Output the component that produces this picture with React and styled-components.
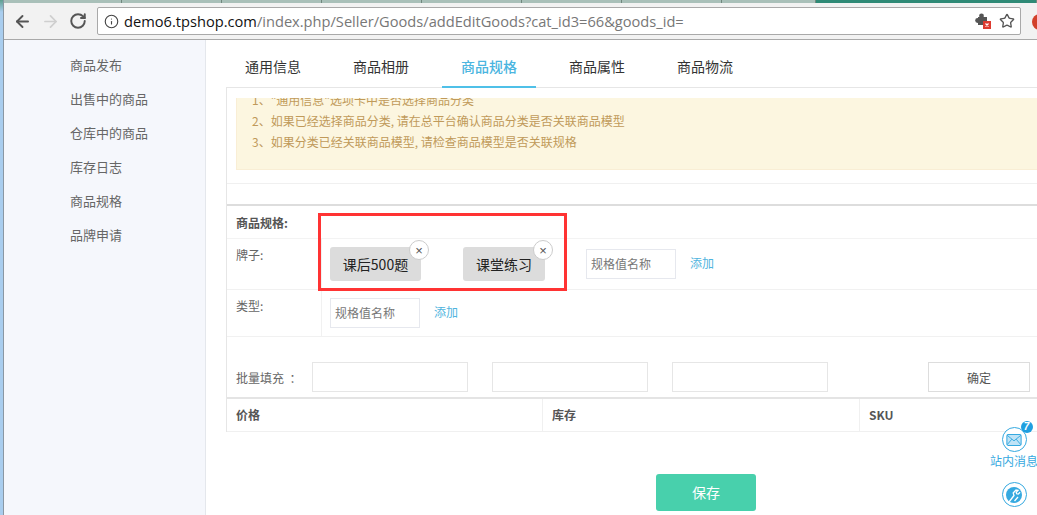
import styled, { createGlobalStyle } from "styled-components";
import { ArrowLeft, ArrowRight, RotateCw, Info, Star } from "lucide-react";

const GlobalStyle = createGlobalStyle`
  html, body { margin: 0; padding: 0; background: #fff; }
  * { box-sizing: border-box; }
  body { font-family: "Noto Sans CJK SC", "Liberation Sans", sans-serif; }
`;

const Page = styled.div`
  position: relative;
  display: flex;
  width: 1037px;
  height: 515px;
  overflow: hidden;
  background: #fff;
`;

const WindowEdge = styled.div`
  width: 4px;
  background: linear-gradient(#5f9f90 0, #a9cdee 12px);
  border-right: 1px solid #8a97a3;
`;

const Window = styled.div`
  flex: 1;
  min-width: 0;
`;

const TabStrip = styled.div`
  display: flex;
  height: 3px;
  background: #a9c0b9;
`;

const StripTab = styled.div`
  width: ${(props) => props.w}px;
  border-right: 1px solid #71887f;
  background: ${(props) => props.bg || "#a9c0b9"};
`;

const Toolbar = styled.div`
  display: flex;
  align-items: center;
  height: 37px;
  padding-left: 9px;
  background: #f2f2f2;
  border-bottom: 1px solid #a9a9a9;
`;

const NavIcons = styled.div`
  display: flex;
  align-items: center;
  width: 84px;
  gap: 9px;
  color: #555;
`;

const UrlBar = styled.div`
  display: flex;
  align-items: center;
  width: 924px;
  height: 28px;
  padding: 0 5px 0 6px;
  background: #fff;
  border: 1px solid #a9a9a9;
  border-radius: 2px;
`;

const Url = styled.div`
  flex: 1;
  margin-left: 5px;
  font-family: "Open Sans", sans-serif;
  font-size: 14.65px;
  color: #111;
  white-space: nowrap;
`;

const UrlPath = styled.span`
  color: #777;
`;

const PuzzleIcon = styled.svg`
  display: block;
  margin-right: 8px;
`;

const ProfileDot = styled.div`
  position: absolute;
  top: 14px;
  left: 1032px;
  width: 16px;
  height: 16px;
  border-radius: 50%;
  background: #d2402a;
`;

const Body = styled.div`
  display: flex;
  height: 475px;
`;

const Sidebar = styled.div`
  width: 202px;
  padding-top: 8px;
  background: #f5f7fc;
  border-right: 1px solid #e4e7ec;
`;

const SideItem = styled.div`
  height: 34px;
  padding-left: 66px;
  font-size: 13px;
  line-height: 34px;
  color: #666;
`;

const Main = styled.div`
  flex: 1;
  min-width: 0;
  padding-left: 20px;
`;

const Tabs = styled.div`
  display: flex;
  height: 48px;
  border-bottom: 1px solid #e6e6e6;
`;

const Tab = styled.div`
  height: 48px;
  margin-right: 14px;
  padding: 0 19px;
  font-size: 14px;
  line-height: 52px;
  font-weight: ${(props) => (props.active ? 500 : 400)};
  color: ${(props) => (props.active ? "#4bb5e0" : "#333")};
  border-bottom: ${(props) => (props.active ? "2px solid #4fc0e8" : "none")};
`;

const Panel = styled.div`
  padding-top: 10px;
  border-left: 1px solid #e6e6e6;
`;

const Notice = styled.div`
  height: 72px;
  margin-left: 9px;
  overflow: hidden;
  background: #fcf6e0;
  border: 1px solid #f9eed5;
  border-top: none;
  border-right: none;
`;

const NoticeList = styled.div`
  margin-top: -9px;
  padding-left: 15px;
  font-size: 12px;
  line-height: 21px;
  color: #c09a5a;
`;

const Rule = styled.div`
  height: 21px;
  margin-top: 13px;
  border-top: 1px solid #f0f0f0;
`;

const TitleRow = styled.div`
  height: 35px;
  padding-left: 9px;
  font-size: 12px;
  font-weight: 700;
  line-height: 33px;
  color: #555;
  border-top: 2px solid #ddd;
  border-bottom: 1px solid #f3f3f3;
`;

const SpecRow = styled.div`
  display: flex;
  height: ${(props) => props.h}px;
  border-bottom: 1px solid #f1f1f1;
`;

const SpecLabel = styled.div`
  width: 95px;
  padding: 6px 0 0 9px;
  font-size: 12px;
  line-height: 20px;
  color: #666;
  border-right: 1px solid #f1f1f1;
`;

const SpecValues = styled.div`
  display: flex;
  align-items: center;
  padding-left: 8px;
`;

const Chip = styled.div`
  position: relative;
  display: flex;
  align-items: center;
  justify-content: center;
  width: ${(props) => props.w}px;
  height: 34px;
  margin-right: ${(props) => props.gap}px;
  font-size: 14px;
  color: #222;
  background: #dcdcdc;
  border-radius: 3px;
`;

const ChipClose = styled.span`
  position: absolute;
  top: -7px;
  right: -8px;
  display: flex;
  align-items: center;
  justify-content: center;
  width: 20px;
  height: 20px;
  font-family: "Liberation Sans", sans-serif;
  font-size: 13px;
  color: #555;
  background: #fff;
  border: 1px solid #ccc;
  border-radius: 50%;
`;

const ValueInput = styled.div`
  width: 90px;
  height: 30px;
  padding-left: 4px;
  font-size: 12px;
  line-height: 27px;
  color: #777;
  border: 1px solid #e6e8ee;
`;

const AddLink = styled.span`
  margin: -4px 0 0 14px;
  font-size: 12px;
  color: #4fb4de;
`;

const BatchRow = styled.div`
  display: flex;
  align-items: center;
  height: 60px;
  padding: 25px 0 5px 9px;
`;

const BatchLabel = styled.div`
  width: 76px;
  font-size: 12px;
  color: #666;
  white-space: pre;
`;

const BatchInput = styled.div`
  width: 156px;
  height: 30px;
  margin-right: 24px;
  border: 1px solid #e6e6e6;
`;

const ConfirmButton = styled.div`
  width: 102px;
  height: 30px;
  margin-left: 76px;
  font-size: 12px;
  line-height: 29px;
  text-align: center;
  color: #555;
  border: 1px solid #ddd;
`;

const PriceTable = styled.div`
  display: grid;
  grid-template-columns: 316px 317px 1fr;
  height: 35px;
  border-top: 2px solid #e4e4e4;
  border-bottom: 1px solid #f0f0f0;
`;

const HeadCell = styled.div`
  padding-left: 9px;
  font-size: 12px;
  font-weight: 700;
  line-height: 31px;
  color: #555;
  border-right: ${(props) => (props.last ? "none" : "1px solid #f0f0f0")};
`;

const SaveRow = styled.div`
  padding: 42px 0 0 430px;
`;

const SaveButton = styled.div`
  width: 100px;
  height: 37px;
  font-size: 14px;
  line-height: 36px;
  text-align: center;
  color: #fff;
  background: #48d0ac;
  border-radius: 3px;
`;

const RedBox = styled.div`
  position: absolute;
  top: 213px;
  left: 318px;
  width: 249px;
  height: 78px;
  border: 3px solid #ff3333;
`;

const FloatTools = styled.div`
  position: absolute;
  top: 427px;
  left: 990px;
  display: flex;
  flex-direction: column;
  align-items: center;
  width: 48px;
  color: #35a9e0;
`;

const RoundIcon = styled.div`
  position: relative;
  display: flex;
  align-items: center;
  justify-content: center;
  width: 25px;
  height: 25px;
  background: #fff;
  border: 1.5px solid #35a9e0;
  border-radius: 50%;
`;

const CountBadge = styled.span`
  position: absolute;
  top: -7px;
  right: -7px;
  width: 12px;
  height: 12px;
  font-family: "Liberation Sans", sans-serif;
  font-size: 10px;
  font-style: italic;
  font-weight: 700;
  line-height: 12px;
  text-align: center;
  color: #fff;
  background: #1f9fe0;
  border-radius: 50%;
`;

const FloatLabel = styled.div`
  margin-bottom: 12px;
  font-size: 12px;
  line-height: 18px;
  white-space: nowrap;
`;

const sideItems = ["商品发布", "出售中的商品", "仓库中的商品", "库存日志", "商品规格", "品牌申请"];
const tabs = ["通用信息", "商品相册", "商品规格", "商品属性", "商品物流"];

export default function App() {
  return (
    <Page>
      <GlobalStyle />
      <WindowEdge />
      <Window>
        <TabStrip>
          <StripTab w={118} />
          <StripTab w={100} />
          <StripTab w={100} />
          <StripTab w={100} />
          <StripTab w={100} />
          <StripTab w={100} />
          <StripTab w={100} />
          <StripTab w={94} />
          <StripTab w={221} bg="#2f8a76" />
        </TabStrip>
        <Toolbar>
          <NavIcons>
            <ArrowLeft size={19} strokeWidth={2.4} />
            <ArrowRight size={19} strokeWidth={2.2} color="#cfcfcf" />
            <RotateCw size={18} strokeWidth={2.6} />
          </NavIcons>
          <UrlBar>
            <Info size={15} strokeWidth={1.8} color="#444" />
            <Url>
              demo6.tpshop.com<UrlPath>/index.php/Seller/Goods/addEditGoods?cat_id3=66&goods_id=</UrlPath>
            </Url>
            <PuzzleIcon width="16" height="16" viewBox="0 0 16 16">
              <circle cx="6.5" cy="3" r="2.4" fill="#555" />
              <circle cx="2.6" cy="7.5" r="2.4" fill="#555" />
              <rect x="3" y="4" width="9" height="8" fill="#555" />
              <rect x="8" y="8" width="8" height="8" fill="#dd3b30" />
              <path d="M10.5 10.5l3 3m0-3l-3 3" stroke="#fff" strokeWidth="1.2" />
            </PuzzleIcon>
            <Star size={16} strokeWidth={2} color="#555" />
          </UrlBar>
        </Toolbar>
        <Body>
          <Sidebar>
            {sideItems.map((item) => (
              <SideItem key={item}>{item}</SideItem>
            ))}
          </Sidebar>
          <Main>
            <Tabs>
              {tabs.map((tab, index) => (
                <Tab key={tab} active={index === 2}>
                  {tab}
                </Tab>
              ))}
            </Tabs>
            <Panel>
              <Notice>
                <NoticeList>
                  <div>1、"通用信息"选项卡中是否选择商品分类</div>
                  <div>2、如果已经选择商品分类, 请在总平台确认商品分类是否关联商品模型</div>
                  <div>3、如果分类已经关联商品模型, 请检查商品模型是否关联规格</div>
                </NoticeList>
              </Notice>
              <Rule />
              <TitleRow>商品规格:</TitleRow>
              <SpecRow h={51}>
                <SpecLabel>牌子:</SpecLabel>
                <SpecValues>
                  <Chip w={91} gap={42}>
                    课后500题
                    <ChipClose>×</ChipClose>
                  </Chip>
                  <Chip w={82} gap={41}>
                    课堂练习
                    <ChipClose>×</ChipClose>
                  </Chip>
                  <ValueInput>规格值名称</ValueInput>
                  <AddLink>添加</AddLink>
                </SpecValues>
              </SpecRow>
              <SpecRow h={47}>
                <SpecLabel>类型:</SpecLabel>
                <SpecValues>
                  <ValueInput>规格值名称</ValueInput>
                  <AddLink>添加</AddLink>
                </SpecValues>
              </SpecRow>
              <BatchRow>
                <BatchLabel>批量填充  ：</BatchLabel>
                <BatchInput />
                <BatchInput />
                <BatchInput />
                <ConfirmButton>确定</ConfirmButton>
              </BatchRow>
              <PriceTable>
                <HeadCell>价格</HeadCell>
                <HeadCell>库存</HeadCell>
                <HeadCell last>SKU</HeadCell>
              </PriceTable>
            </Panel>
            <SaveRow>
              <SaveButton>保存</SaveButton>
            </SaveRow>
          </Main>
        </Body>
      </Window>
      <ProfileDot />
      <RedBox />
      <FloatTools>
        <RoundIcon>
          <svg width="16" height="12" viewBox="0 0 18 14">
            <rect x="0.7" y="0.7" width="16.6" height="12.6" rx="1.5" fill="#bfe3f6" stroke="#35a9e0" strokeWidth="1.2" />
            <path d="M1 1.5l8 6.5 8-6.5M1 12.5l5.5-6.5M17 12.5l-5.5-6.5" fill="none" stroke="#35a9e0" strokeWidth="1.1" />
          </svg>
          <CountBadge>7</CountBadge>
        </RoundIcon>
        <FloatLabel>站内消息</FloatLabel>
        <RoundIcon>
          <svg width="18" height="18" viewBox="0 0 18 18">
            <circle cx="9" cy="9" r="8" fill="#35a9e0" />
            <path d="M4 16l5-6.5-.8-2.5 2.8-3 2 .4-1.8 2 .5 1.4 1.5.3 1.9-1.9M9.5 15l3.5-4" fill="none" stroke="#fff" strokeWidth="1.3" />
          </svg>
        </RoundIcon>
      </FloatTools>
    </Page>
  );
}
